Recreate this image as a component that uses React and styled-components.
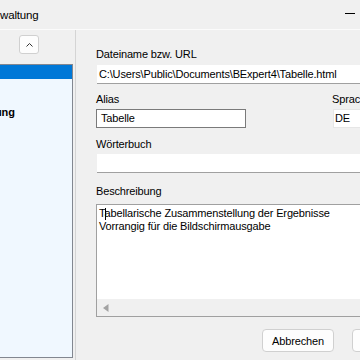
import React from "react";
import styled, { createGlobalStyle } from "styled-components";

const Global = createGlobalStyle`
  html, body { margin: 0; padding: 0; background: #f0f0f0; }
  body {
    font-family: "Liberation Sans", Arial, sans-serif;
    font-size: 11px;
    letter-spacing: -0.15px;
    color: #000;
  }
  * { box-sizing: border-box; }
`;

const Window = styled.div`
  width: 360px;
  height: 360px;
  overflow: hidden;
  background: #f0f0f0;
  display: flex;
  flex-direction: column;
`;

const TitleBar = styled.div`
  flex: none;
  height: 30px;
  border-bottom: 1px solid #fbfbfb;
  display: flex;
  align-items: center;
  justify-content: space-between;
  padding-right: 5px;
`;

const Title = styled.span`
  font-size: 11.5px;
  line-height: 16px;
  margin-top: 1px;
  white-space: nowrap;
`;

const MinimizeGlyph = styled.span`
  width: 10px;
  height: 1px;
  background: #000;
  margin-bottom: 3px;
`;

const Body = styled.div`
  flex: 1;
  display: flex;
  min-height: 0;
`;

const LeftPane = styled.div`
  flex: none;
  width: 73px;
  display: flex;
  flex-direction: column;
`;

const PaneHeader = styled.div`
  flex: none;
  height: 34px;
  padding: 5px 0 0 19px;
`;

const ScrollUpButton = styled.div`
  width: 20px;
  height: 19px;
  border: 1px solid #d0d0d0;
  border-radius: 3px;
  background: #fdfdfd;
  display: flex;
  align-items: center;
  justify-content: center;
`;

const ListBox = styled.div`
  flex: 1;
  margin-bottom: 2px;
  border-top: 1px solid #828790;
  border-right: 1px solid #828790;
  border-bottom: 1px solid #828790;
  background: #f0f8ff;
  overflow: hidden;
`;

const ListRow = styled.div`
  height: ${(p) => p.$h}px;
  line-height: ${(p) => p.$h}px;
  margin-top: ${(p) => p.$mt || 0}px;
  background: ${(p) => (p.$selected ? "#0078d7" : "transparent")};
  color: ${(p) => (p.$selected ? "#fff" : "#000")};
  font-weight: ${(p) => (p.$bold ? 700 : 400)};
  white-space: nowrap;
  text-indent: ${(p) => p.$indent || 0}px;
`;

const Splitter = styled.div`
  flex: none;
  width: 1px;
  margin-left: 2px;
  background: #d4d4d4;
`;

const RightPane = styled.div`
  flex: none;
  width: 348px;
  padding: 16px 0 0 20px;
  display: flex;
  flex-direction: column;
`;

const Label = styled.div`
  height: 16px;
  line-height: 16px;
  margin-top: ${(p) => p.$mt || 0}px;
  white-space: nowrap;
`;

const FlatInput = styled.div`
  height: 19px;
  margin-top: ${(p) => p.$mt || 0}px;
  margin-left: 1px;
  background: #fff;
  border-bottom: 1px solid #a0a0a0;
  padding-left: 2px;
  line-height: 18px;
  white-space: nowrap;
  overflow: hidden;
`;

const FieldRow = styled.div`
  display: grid;
  grid-template-columns: 236px 1fr;
  margin-top: 7px;
`;

const Field = styled.div`
  display: flex;
  flex-direction: column;
`;

const BoxInput = styled.div`
  width: ${(p) => (p.$w ? `${p.$w}px` : "auto")};
  height: 19px;
  margin-top: 2px;
  margin-left: ${(p) => p.$ml || 0}px;
  background: #fff;
  border: 1px solid ${(p) => p.$border};
  padding-left: ${(p) => p.$pl}px;
  line-height: 17px;
  white-space: nowrap;
`;

const TextArea = styled.div`
  margin-top: 5px;
  height: 113px;
  border: 1px solid #a0a0a0;
  background: #fff;
  display: flex;
  flex-direction: column;
`;

const TextContent = styled.div`
  flex: 1;
  padding: 2px 2px;
  line-height: 13px;
  white-space: nowrap;
`;

const Caret = styled.span`
  display: inline-block;
  width: 1px;
  height: 12px;
  margin-right: -1px;
  margin-left: -1px;
  background: #000;
  vertical-align: -3px;
`;

const HScrollBar = styled.div`
  flex: none;
  height: 17px;
  background: #f0f0f0;
  display: flex;
  align-items: center;
  padding-left: 6px;
`;

const ButtonRow = styled.div`
  display: flex;
  justify-content: flex-end;
  gap: 18px;
  margin-top: 12px;
`;

const Button = styled.div`
  width: 72px;
  height: 23px;
  border: 1px solid #d0d0d0;
  border-radius: 4px;
  background: #fdfdfd;
  display: flex;
  align-items: center;
  justify-content: center;
`;

export default function App() {
  return (
    <>
      <Global />
      <Window>
        <TitleBar>
          <Title>waltung</Title>
          <MinimizeGlyph />
        </TitleBar>
        <Body>
          <LeftPane>
            <PaneHeader>
              <ScrollUpButton>
                <svg width="7" height="4" viewBox="0 0 7 4">
                  <polyline points="0.5,3.5 3.5,0.5 6.5,3.5" fill="none" stroke="#333" strokeWidth="1" />
                </svg>
              </ScrollUpButton>
            </PaneHeader>
            <ListBox>
              <ListRow $h={14} $selected />
              <ListRow $h={16} $mt={25} $bold $indent={-5}>
                ung
              </ListRow>
            </ListBox>
          </LeftPane>
          <Splitter />
          <RightPane>
            <Label>Dateiname bzw. URL</Label>
            <FlatInput $mt={3}>C:\Users\Public\Documents\BExpert4\Tabelle.html</FlatInput>
            <FieldRow>
              <Field>
                <Label>Alias</Label>
                <BoxInput $w={150} $border="#7a7a7a" $pl={4}>
                  Tabelle
                </BoxInput>
              </Field>
              <Field>
                <Label>Sprache</Label>
                <BoxInput $ml={1} $border="#e6e6e6" $pl={1}>
                  DE
                </BoxInput>
              </Field>
            </FieldRow>
            <Label $mt={8}>Wörterbuch</Label>
            <FlatInput $mt={2} />
            <Label $mt={10}>Beschreibung</Label>
            <TextArea>
              <TextContent>
                T<Caret />abellarische Zusammenstellung der Ergebnisse
                <br />
                Vorrangig für die Bildschirmausgabe
              </TextContent>
              <HScrollBar>
                <svg width="6" height="8" viewBox="0 0 6 8">
                  <polygon points="5.5,0 5.5,8 0,4" fill="#a3a3a3" />
                </svg>
              </HScrollBar>
            </TextArea>
            <ButtonRow>
              <Button>Abbrechen</Button>
              <Button>OK</Button>
            </ButtonRow>
          </RightPane>
        </Body>
      </Window>
    </>
  );
}
